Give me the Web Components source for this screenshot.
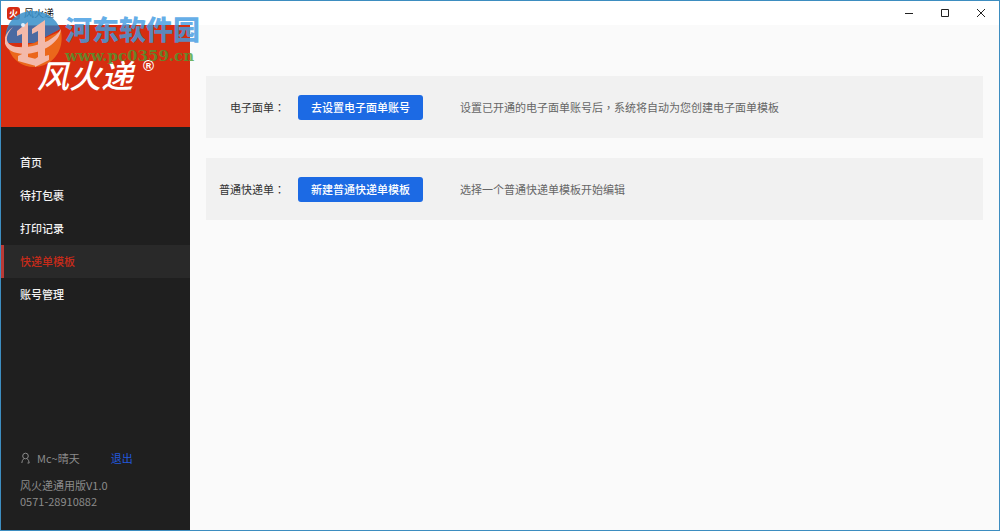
<!DOCTYPE html>
<html lang="zh-CN">
<head>
<meta charset="utf-8">
<title>风火递</title>
<style>
  body { margin: 0; font-family: "Noto Sans CJK SC", sans-serif; font-size: 11px; line-height: 16px; color: #333; }
</style>
</head>
<body>
<app-window>
  <title-bar slot="title">风火递</title-bar>
  <side-bar slot="side">
    <brand-logo slot="brand"></brand-logo>
    <nav-item href="#home">首页</nav-item>
    <nav-item href="#pending">待打包裹</nav-item>
    <nav-item href="#records">打印记录</nav-item>
    <nav-item href="#templates" active>快递单模板</nav-item>
    <nav-item href="#accounts">账号管理</nav-item>
    <user-info slot="footer"></user-info>
  </side-bar>
  <template-row label="电子面单" action="去设置电子面单账号">设置已开通的电子面单账号后<span style="font-family:'Noto Sans CJK TC',sans-serif" lang="zh-TW">，</span>系统将自动为您创建电子面单模板</template-row>
  <template-row label="普通快递单" action="新建普通快递单模板">选择一个普通快递单模板开始编辑</template-row>
  <site-mark slot="mark"></site-mark>
</app-window>
<script>
const define = (name, html, setup) => customElements.define(name, class extends HTMLElement {
  constructor() {
    super();
    this.attachShadow({ mode: "open" }).innerHTML = html;
  }
  connectedCallback() { if (setup) setup(this, this.shadowRoot); }
});

define("app-window", `
<style>
  :host { display: flex; flex-direction: column; position: relative; box-sizing: border-box; min-height: 100vh; border: 1px solid #3d8dc0; background: #fafafa; }
  .body { flex: 1; display: flex; }
  main { flex: 1; min-width: 0; display: flex; flex-direction: column; gap: 20px; padding: 51px 16px 16px; }
</style>
<slot name="title"></slot>
<div class="body"><slot name="side"></slot><main><slot></slot></main></div>
<slot name="mark"></slot>`);

define("title-bar", `
<style>
  :host { display: flex; align-items: center; height: 24px; background: #fff; color: #111; }
  .icon { width: 13px; height: 13px; margin: 0 4px 0 6px; border-radius: 3px; background: #d62b12; color: #fff; font-size: 9px; line-height: 13px; font-weight: 700; text-align: center; }
  .name { flex: 1; font-size: 10px; }
  button { width: 36px; height: 24px; padding: 0; border: 0; background: none; display: grid; place-items: center; }
  svg { width: 10px; height: 10px; fill: none; stroke: #222; display: block; }
</style>
<span class="icon">火</span><span class="name"><slot></slot></span>
<button aria-label="最小化"><svg viewBox="0 0 10 10"><path d="M1 5.5h8"/></svg></button>
<button aria-label="最大化"><svg viewBox="0 0 10 10"><path d="M1.5 1.5h7v7h-7z"/></svg></button>
<button aria-label="关闭"><svg viewBox="0 0 10 10"><path d="M1 1l8 8M9 1L1 9"/></svg></button>`);

define("side-bar", `
<style>
  :host { display: flex; flex-direction: column; width: 189px; background: #1f1f1f; }
  nav { flex: 1; padding-top: 19px; }
</style>
<slot name="brand"></slot>
<nav><slot></slot></nav>
<slot name="footer"></slot>`);

define("brand-logo", `
<style>
  :host { display: flex; align-items: flex-start; height: 69px; padding: 33px 0 0 36px; background: #d62d10; color: #fff; }
  .word { font-size: 32px; line-height: 32px; font-style: italic; font-weight: 500; }
  .reg { font-size: 15px; line-height: 16px; padding-left: 10px; font-family: "Liberation Sans", sans-serif; font-weight: 700; }
</style>
<span class="word">风火递</span><span class="reg">®</span>`);

define("nav-item", `
<style>
  :host { display: block; }
  a { display: block; padding-left: 19px; line-height: 33px; color: #f2f2f2; font-weight: 500; text-decoration: none; }
  :host([active]) a { padding-left: 16px; border-left: 3px solid #b93a36; background: #292929; color: #c62b1a; }
</style>
<a><slot></slot></a>`, (host, root) => { root.querySelector("a").href = host.getAttribute("href"); });

define("user-info", `
<style>
  :host { display: block; padding: 0 19px 21px; color: #8b8b8b; }
  .user { display: flex; align-items: center; margin-bottom: 11px; }
  svg { width: 11px; height: 12px; margin-right: 6px; fill: none; stroke: #8b8b8b; }
  a { margin-left: 31px; color: #2258dc; text-decoration: none; }
</style>
<div class="user"><svg viewBox="0 0 11 12"><circle cx="5.5" cy="4" r="2.8"/><path d="M4 6.5Q2 8 1.8 11M7 6.5Q9 8 9.2 11H7.5"/></svg><span>Mc~晴天</span><a href="#logout">退出</a></div>
<div>风火递通用版V1.0</div>
<div>0571-28910882</div>`);

define("template-row", `
<style>
  :host { display: flex; align-items: center; height: 62px; background: #f1f1f1; color: #666; }
  label { width: 79px; text-align: right; color: #333; }
  label span { font-family: "Noto Sans CJK TC", sans-serif; }
  button { width: 125px; height: 25px; margin: 0 37px 0 13px; padding: 0; border: 0; border-radius: 3px; background: #1c6ae4; color: #fff; font: inherit; font-weight: 500; }
  b { font-weight: 400; }
</style>
<label for="act"><b></b><span lang="zh-TW">：</span></label><button id="act"></button><div><slot></slot></div>`,
(host, root) => {
  root.querySelector("b").textContent = host.getAttribute("label");
  root.querySelector("button").textContent = host.getAttribute("action");
});

define("site-mark", `
<style>
  :host { position: absolute; left: 4px; top: 10px; display: flex; gap: 2px; pointer-events: none; }
  svg { width: 58px; height: 56px; }
  .text { padding-top: 2px; }
  .cn { font-size: 27px; line-height: 32px; font-weight: 900; color: rgba(66,156,226,.82); }
  .url { font-family: "DejaVu Serif", serif; font-size: 15px; line-height: 22px; font-weight: 700; color: rgba(66,160,50,.75); }
</style>
<svg viewBox="0 0 58 56">
  <path d="M1 32C-2 12 12 0 28 0C41 0 51 7 55 18L29 32Z" fill="#388fca" fill-opacity=".86"/>
  <path d="M1 15H54L55 18L29 32L1 32Q0 22 4 15Z" fill="#4a5e99" fill-opacity=".65"/>
  <path d="M4 39L29 32L56 20C60 42 45 56 29 56C17 56 8 49 4 39Z" fill="#ee6f1c" fill-opacity=".88"/>
  <path d="M8 16C-4 29 2 38 22 36C38 34 51 27 56 18C55 32 37 42 20 43C-3 43 -6 26 8 16Z" fill="#f3b9aa"/>
  <path d="M12 20L23 11V46L31 48V55L13 50V45L17 43V23L12 25ZM27 18L40 9V45L44 44V49L30 56V48L33 46V20L27 23Z" fill="#f3b9aa"/>
  <circle cx="18" cy="14" r="2" fill="#dcefff"/>
</svg>
<div class="text"><div class="cn">河东软件园</div><div class="url">www.pc0359.cn</div></div>`);
</script>
</body>
</html>
